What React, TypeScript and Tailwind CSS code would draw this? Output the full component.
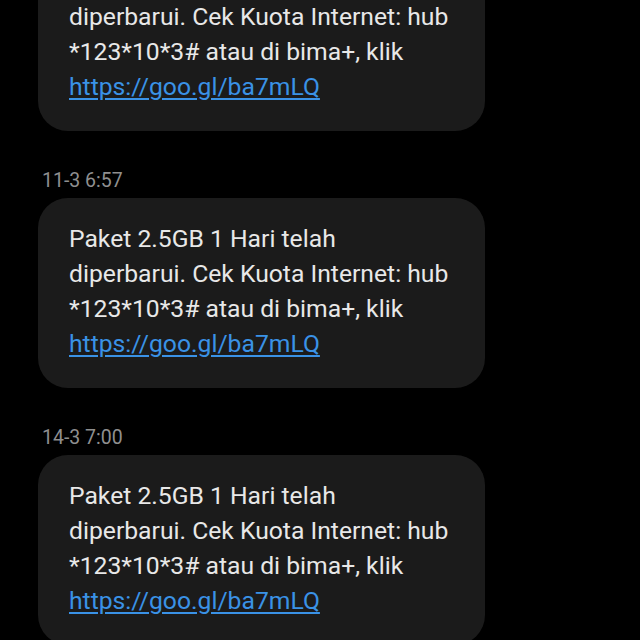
import React from 'react';

interface Message {
  time?: string;
  lines: string[];
  link: string;
}

const messages: Message[] = [
  {
    lines: [
      'Paket 2.5GB 1 Hari telah',
      'diperbarui. Cek Kuota Internet: hub',
      '*123*10*3# atau di bima+, klik',
    ],
    link: 'https://goo.gl/ba7mLQ',
  },
  {
    time: '11-3 6:57',
    lines: [
      'Paket 2.5GB 1 Hari telah',
      'diperbarui. Cek Kuota Internet: hub',
      '*123*10*3# atau di bima+, klik',
    ],
    link: 'https://goo.gl/ba7mLQ',
  },
  {
    time: '14-3 7:00',
    lines: [
      'Paket 2.5GB 1 Hari telah',
      'diperbarui. Cek Kuota Internet: hub',
      '*123*10*3# atau di bima+, klik',
    ],
    link: 'https://goo.gl/ba7mLQ',
  },
];

function Bubble({ msg }: { msg: Message }) {
  return (
    <div className="w-[447px] rounded-[30px] bg-[#1b1b1b] pl-[31px] pr-4 pt-[23px] pb-[27px] text-[24.7px] leading-[35px] text-[#e8e8e8]">
      {msg.lines.map((line, i) => (
        <div key={i} className="whitespace-nowrap">
          {line}
        </div>
      ))}
      <a href="#" className="text-[#3a92e6] underline underline-offset-[3px]">
        {msg.link}
      </a>
    </div>
  );
}

export default function App() {
  return (
    <div
      className="h-[640px] w-[640px] overflow-hidden bg-black"
      style={{ fontFamily: 'Roboto, "Noto Sans", sans-serif' }}
    >
      <div className="-mt-[59px] flex flex-col pl-[38px]">
        {messages.map((msg, i) => (
          <div key={i} className="flex flex-col">
            {msg.time && (
              <div className="mt-[40px] mb-[7px] pl-1 text-[19.5px] leading-[20px] text-[#8f8f8f]">
                {msg.time}
              </div>
            )}
            <Bubble msg={msg} />
          </div>
        ))}
      </div>
    </div>
  );
}
